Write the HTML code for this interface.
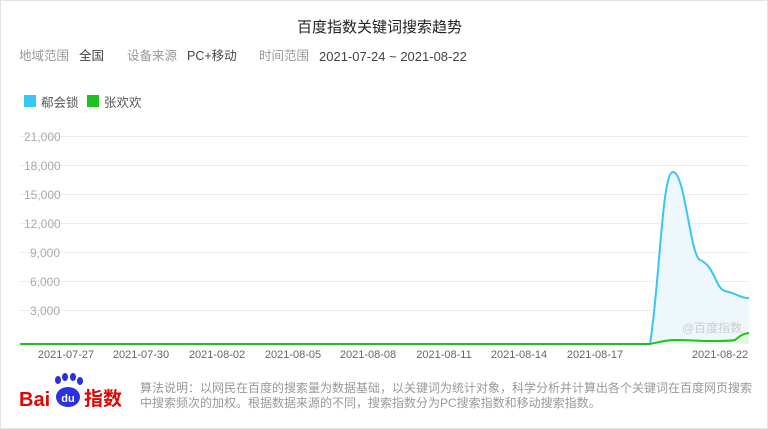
<!DOCTYPE html>
<html><head><meta charset="utf-8"><style>
body{margin:0;width:768px;height:429px;background:#fff;font-family:"Liberation Sans","Noto Sans CJK SC",sans-serif;overflow:hidden}
.frame{position:absolute;left:0;top:0;width:766px;height:427px;border:1px solid #e3e3e3}
.t{position:absolute;white-space:nowrap}
.row span{position:absolute;top:0;line-height:18px;font-size:12.5px;white-space:nowrap}
</style></head><body>
<div class="frame"></div>
<div class="t" style="left:297px;top:16px;font-size:15px;color:#222">百度指数关键词搜索趋势</div>
<div class="row" style="position:absolute;left:0;top:47px;width:768px;height:18px">
<span style="left:19px;color:#999">地域范围</span>
<span style="left:79px;color:#444">全国</span>
<span style="left:127px;color:#999">设备来源</span>
<span style="left:187px;color:#444">PC+移动</span>
<span style="left:259px;color:#999">时间范围</span>
<span style="left:319px;color:#444;font-size:13px;top:1px">2021-07-24 ~ 2021-08-22</span>
</div>
<div style="position:absolute;left:24px;top:95px;width:12px;height:12px;background:#38c6f5"></div>
<div class="t" style="left:41px;top:92px;font-size:12.5px;color:#555">郗会锁</div>
<div style="position:absolute;left:87px;top:95px;width:12px;height:12px;background:#1ec41e"></div>
<div class="t" style="left:104px;top:92px;font-size:12.5px;color:#555">张欢欢</div>
<svg style="position:absolute;left:0;top:0" width="768" height="429">
<g stroke="#eee" stroke-width="1">
<line x1="20" y1="136.5" x2="749" y2="136.5"/><line x1="20" y1="165.5" x2="749" y2="165.5"/><line x1="20" y1="194.5" x2="749" y2="194.5"/><line x1="20" y1="223.5" x2="749" y2="223.5"/><line x1="20" y1="252.5" x2="749" y2="252.5"/><line x1="20" y1="281.5" x2="749" y2="281.5"/><line x1="20" y1="310.5" x2="749" y2="310.5"/>
</g>
<g font-size="12" fill="#aaa" font-family="Liberation Sans,sans-serif">
<text x="24" y="141">21,000</text><text x="24" y="170">18,000</text><text x="24" y="199">15,000</text><text x="24" y="228">12,000</text><text x="30" y="257">9,000</text><text x="30" y="286">6,000</text><text x="30" y="315">3,000</text>
</g>
<path d="M650,344 C660,280 662,172 673,172 C685,172 690,255 700,260 C715,266 715,288 725,291 C738,294 740,298 749,298 L749,344 Z" fill="#eef8fc"/>
<path d="M20,344 L650,344 C660,280 662,172 673,172 C685,172 690,255 700,260 C715,266 715,288 725,291 C738,294 740,298 749,298" fill="none" stroke="#38c6f5" stroke-width="2"/>
<path d="M650,344 C660,342 665,340 675,340 C690,340 700,341 710,341 C725,341 730,341 735,340 C740,336 742,334 749,333 L749,344 Z" fill="#e6f7e6"/>
<path d="M20,344 L650,344 C660,342 665,340 675,340 C690,340 700,341 710,341 C725,341 730,341 735,340 C740,336 742,334 749,333" fill="none" stroke="#1ec41e" stroke-width="2"/>
<text x="682" y="332" font-size="12" fill="#ccc" font-family="Liberation Sans,Noto Sans CJK SC,sans-serif">@百度指数</text>
<g font-size="11" fill="#666" font-family="Liberation Sans,sans-serif" text-anchor="middle">
<text x="66" y="358">2021-07-27</text><text x="141" y="358">2021-07-30</text><text x="217" y="358">2021-08-02</text><text x="293" y="358">2021-08-05</text><text x="368" y="358">2021-08-08</text><text x="444" y="358">2021-08-11</text><text x="519" y="358">2021-08-14</text><text x="595" y="358">2021-08-17</text><text x="720" y="358">2021-08-22</text>
</g>
<text x="19" y="406" font-size="20" font-weight="bold" fill="#e10601" font-family="Liberation Sans,sans-serif">Bai</text>
<g fill="#2932e1"><ellipse cx="58" cy="380" rx="3" ry="4"/><ellipse cx="65" cy="377" rx="3" ry="4"/><ellipse cx="73" cy="377" rx="3" ry="4"/><ellipse cx="80" cy="381" rx="3" ry="4"/><ellipse cx="68" cy="397" rx="12" ry="10"/></g>
<text x="68" y="402" font-size="11" font-weight="bold" fill="#fff" text-anchor="middle" font-family="Liberation Sans,sans-serif">du</text>
<text x="84" y="405" font-size="19" font-weight="bold" fill="#e10601" font-family="Noto Sans CJK SC,sans-serif">指数</text>
</svg>
<div class="t" style="left:140px;top:381px;font-size:12px;line-height:15px;color:#999;white-space:normal;width:620px">算法说明：以网民在百度的搜索量为数据基础，以关键词为统计对象，科学分析并计算出各个关键词在百度网页搜索中搜索频次的加权。根据数据来源的不同，搜索指数分为PC搜索指数和移动搜索指数。</div>
</body></html>
